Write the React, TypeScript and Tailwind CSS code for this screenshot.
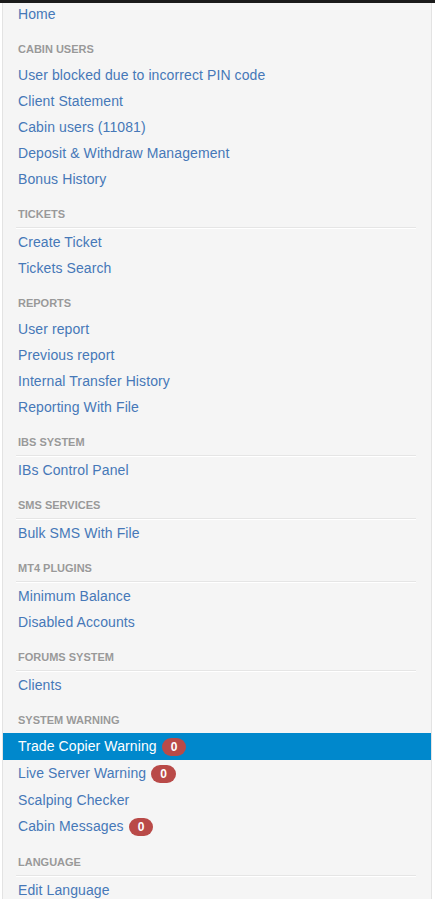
import React from 'react';

interface NavItem {
  label: string;
  badge?: number;
  active?: boolean;
}

interface NavSection {
  title: string;
  divider?: boolean;
  items: NavItem[];
}

const sections: NavSection[] = [
  {
    title: 'Cabin Users',
    items: [
      { label: 'User blocked due to incorrect PIN code' },
      { label: 'Client Statement' },
      { label: 'Cabin users (11081)' },
      { label: 'Deposit & Withdraw Management' },
      { label: 'Bonus History' },
    ],
  },
  {
    title: 'Tickets',
    divider: true,
    items: [{ label: 'Create Ticket' }, { label: 'Tickets Search' }],
  },
  {
    title: 'Reports',
    items: [
      { label: 'User report' },
      { label: 'Previous report' },
      { label: 'Internal Transfer History' },
      { label: 'Reporting With File' },
    ],
  },
  { title: 'IBs System', divider: true, items: [{ label: 'IBs Control Panel' }] },
  { title: 'SMS Services', divider: true, items: [{ label: 'Bulk SMS With File' }] },
  {
    title: 'MT4 Plugins',
    divider: true,
    items: [{ label: 'Minimum Balance' }, { label: 'Disabled Accounts' }],
  },
  { title: 'Forums System', divider: true, items: [{ label: 'Clients' }] },
  {
    title: 'System Warning',
    items: [
      { label: 'Trade Copier Warning', badge: 0, active: true },
      { label: 'Live Server Warning', badge: 0 },
      { label: 'Scalping Checker' },
      { label: 'Cabin Messages', badge: 0 },
    ],
  },
  { title: 'Language', divider: true, items: [{ label: 'Edit Language' }] },
];

function NavLink({ item }: { item: NavItem }) {
  return (
    <a
      href="#"
      className={`flex items-center px-[15px] text-[14px] tracking-[0.1px] ${
        item.badge !== undefined ? 'h-[27px]' : 'h-[26px]'
      } ${item.active ? 'bg-[#0088cc] text-white' : 'text-[#4678b8]'}`}
    >
      <span>{item.label}</span>
      {item.badge !== undefined && (
        <span className="ml-[5px] inline-flex h-[18px] items-center rounded-full bg-[#b94a48] px-[9px] text-[12px] font-bold leading-[18px] tracking-normal text-white">
          {item.badge}
        </span>
      )}
    </a>
  );
}

export default function App() {
  return (
    <div
      className="h-[899px] w-[435px] overflow-hidden bg-white"
      style={{ fontFamily: '"Liberation Sans", Arial, sans-serif' }}
    >
      <div className="h-[3px] bg-[#1b1b1b]" />
      <div className="ml-[2px] h-[896px] w-[430px] border-l border-r border-[#e3e3e3] bg-[#f5f5f5]">
        <nav className="flex flex-col">
          <a href="#" className="block h-[24px] px-[15px] text-[14px] leading-[22px] tracking-[0.1px] text-[#4678b8]">
            Home
          </a>

          {sections.map((section) => (
            <div key={section.title} className="flex flex-col">
              <div className="mt-[8px] h-[26px] px-[15px] text-[11px] font-bold uppercase leading-[28px] text-[#999999] [text-shadow:0_1px_0_rgba(255,255,255,0.5)]">
                {section.title}
              </div>
              {section.divider ? (
                <div className="h-[3px] pt-[1px]">
                  <div className="ml-[13px] mr-[15px] h-[1px] bg-[#e5e5e5]" />
                  <div className="ml-[13px] mr-[15px] h-[1px] bg-white" />
                </div>
              ) : (
                <div className="h-[1px]" />
              )}
              {section.items.map((item) => (
                <NavLink key={item.label} item={item} />
              ))}
            </div>
          ))}
        </nav>
      </div>
    </div>
  );
}
